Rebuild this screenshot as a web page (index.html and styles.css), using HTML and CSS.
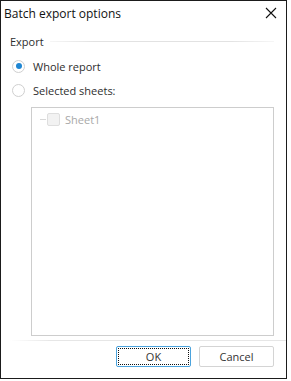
FILE: index.html
```html
<!DOCTYPE html>
<html>
<head>
<meta charset="utf-8">
<link rel="stylesheet" href="styles.css">
</head>
<body>
<div class="window">
  <div class="titlebar">
    <span class="title">Batch export options</span>
    <svg class="close" width="12" height="12" viewBox="0 0 12 12"><path d="M1 1L11 11M11 1L1 11" stroke="#111" stroke-width="1.1" fill="none"/></svg>
  </div>
  <div class="content">
    <div class="group-header"><span>Export</span><div class="group-line"></div></div>
    <div class="radio-row first"><span class="radio checked"></span><span class="label">Whole report</span></div>
    <div class="radio-row"><span class="radio"></span><span class="label">Selected sheets:</span></div>
    <div class="tree">
      <div class="tree-item"><span class="dash"></span><span class="checkbox"></span><span class="item-label">Sheet1</span></div>
    </div>
  </div>
  <div class="separator"></div>
  <div class="buttons">
    <button class="btn primary"><span class="focus">OK</span></button>
    <button class="btn">Cancel</button>
  </div>
</div>
</body>
</html>
```

FILE: styles.css
```css
html, body { margin: 0; padding: 0; background: #fff; }
body { font-family: "Open Sans", "Noto Sans", sans-serif; font-size: 11px; color: #2e2e2e; }
.window {
  width: 287px; height: 379px; box-sizing: border-box;
  border: 1px solid #1b1b1b; background: #fff;
  display: flex; flex-direction: column;
}
.titlebar {
  height: 24px; display: flex; align-items: center; justify-content: space-between;
  padding: 0 9px 0 3px;
}
.title { font-size: 12px; color: #111; }
.close { display: block; }
.content { padding: 0 12px 0 9px; display: flex; flex-direction: column; }
.group-header { display: flex; align-items: center; height: 15px; margin-top: 9px; }
.group-line {
  flex: 1; height: 1px; margin-left: 6px;
  background: linear-gradient(to right, #f6f6f6, #e2e2e2 20%, #e2e2e2 80%, #f6f6f6);
}
.radio-row { display: flex; align-items: center; height: 24px; }
.radio-row.first { margin-top: 5px; }
.radio {
  width: 13px; height: 13px; box-sizing: border-box; border-radius: 50%;
  border: 1px solid #cfcfcf; background: #fff; margin-left: 2px; margin-right: 8px;
  display: flex; align-items: center; justify-content: center;
}
.radio.checked::after {
  content: ""; width: 6px; height: 6px; border-radius: 50%; background: #1f86d3;
}
.tree {
  margin-left: 21px; margin-top: 5px; height: 229px; box-sizing: border-box;
  border: 1px solid #cdcdcd; background: #fff;
}
.tree-item { display: flex; align-items: center; height: 15px; margin-top: 4px; }
.dash { width: 6px; height: 1px; background: #d8d8d8; margin-left: 8px; margin-right: 1px; }
.checkbox {
  width: 13px; height: 13px; box-sizing: border-box; border-radius: 2px;
  border: 1px solid #dedede; background: #f2f2f2; margin-right: 5px;
}
.item-label { color: #a8a8a8; }
.separator {
  height: 1px; margin: 4px 0 0 9px;
  background: linear-gradient(to right, #ffffff, #e6e6e6 15%, #e6e6e6);
}
.buttons { display: flex; justify-content: flex-end; gap: 8px; padding: 5px 12px 0 0; }
.btn {
  width: 75px; height: 21px; box-sizing: border-box; padding: 0;
  border: 1px solid #d4d4d4; border-radius: 2px; background: #fff;
  font: inherit; color: #333; display: flex; align-items: center; justify-content: center;
}
.btn.primary { border-color: #4ba3dd; padding: 1px; }
.focus {
  width: 100%; height: 100%; box-sizing: border-box; border: 1px dotted #111;
  display: flex; align-items: center; justify-content: center;
}
```
